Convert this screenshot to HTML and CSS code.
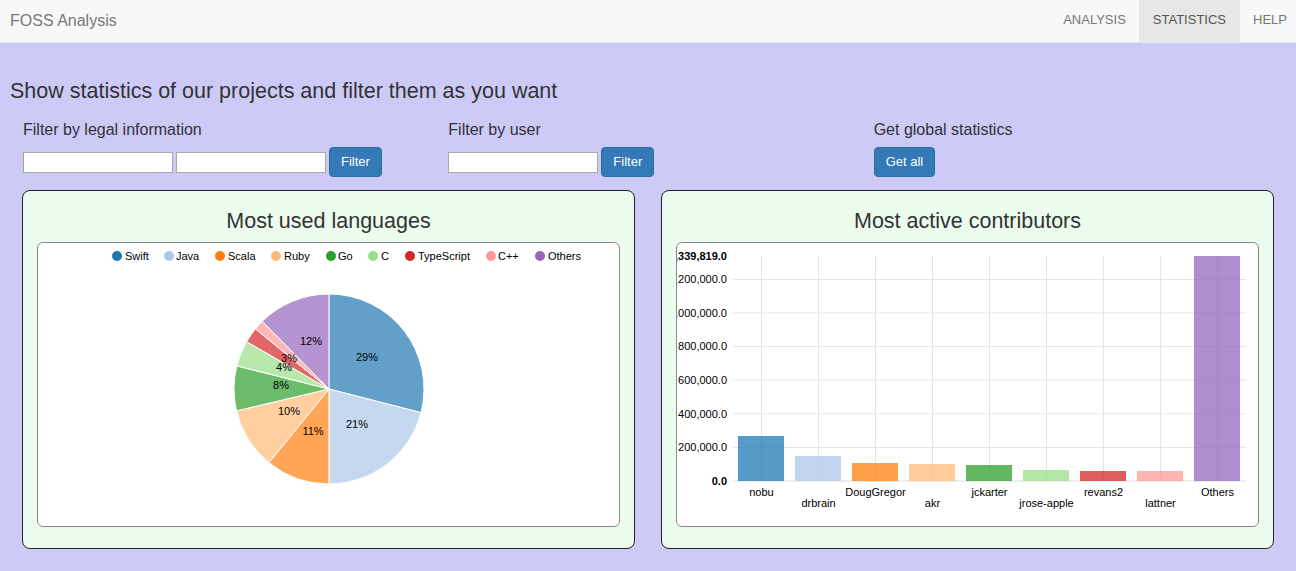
FILE: index.html
```html
<!DOCTYPE html>
<html lang="en">
<head>
<meta charset="utf-8">
<title>FOSS Analysis</title>
<link rel="stylesheet" href="styles.css">
</head>
<body>
<nav class="navbar">
  <div class="brand">FOSS Analysis</div>
  <ul class="nav">
    <li class="nav-item">ANALYSIS</li>
    <li class="nav-item active">STATISTICS</li>
    <li class="nav-item last">HELP</li>
  </ul>
</nav>
<main class="page">
  <h1 class="page-title">Show statistics of our projects and filter them as you want</h1>
  <div class="filters">
    <div class="filter">
      <label class="filter-label">Filter by legal information</label>
      <div class="controls">
        <input class="text-input" type="text">
        <input class="text-input" type="text">
        <button class="btn">Filter</button>
      </div>
    </div>
    <div class="filter">
      <label class="filter-label">Filter by user</label>
      <div class="controls">
        <input class="text-input" type="text">
        <button class="btn">Filter</button>
      </div>
    </div>
    <div class="filter">
      <label class="filter-label">Get global statistics</label>
      <div class="controls">
        <button class="btn">Get all</button>
      </div>
    </div>
  </div>
  <div class="cards">
    <section class="card">
      <h2 class="card-title">Most used languages</h2>
      <div class="chart-box">
        <svg class="chart" width="582" height="283" viewBox="0 0 582 283">
          <g class="legend">
            <circle cx="79" cy="13" r="5" fill="#1f77b4"/><text x="87" y="13" dy="0.35em">Swift</text>
            <circle cx="131" cy="13" r="5" fill="#aec7e8"/><text x="138" y="13" dy="0.35em">Java</text>
            <circle cx="182" cy="13" r="5" fill="#ff7f0e"/><text x="190" y="13" dy="0.35em">Scala</text>
            <circle cx="238" cy="13" r="5" fill="#ffbb78"/><text x="246" y="13" dy="0.35em">Ruby</text>
            <circle cx="293" cy="13" r="5" fill="#2ca02c"/><text x="300" y="13" dy="0.35em">Go</text>
            <circle cx="335" cy="13" r="5" fill="#98df8a"/><text x="343" y="13" dy="0.35em">C</text>
            <circle cx="372" cy="13" r="5" fill="#d62728"/><text x="380" y="13" dy="0.35em">TypeScript</text>
            <circle cx="453" cy="13" r="5" fill="#ff9896"/><text x="460" y="13" dy="0.35em">C++</text>
            <circle cx="502" cy="13" r="5" fill="#9467bd"/><text x="510" y="13" dy="0.35em">Others</text>
          </g>
          <g class="pie">
            <path fill="#1f77b4" d="M291,146 L291,51 A95,95 0 0,1 383.02,169.63 Z"/>
            <path fill="#aec7e8" d="M291,146 L383.02,169.63 A95,95 0 0,1 291,241 Z"/>
            <path fill="#ff7f0e" d="M291,146 L291,241 A95,95 0 0,1 230.89,219.57 Z"/>
            <path fill="#ffbb78" d="M291,146 L230.89,219.57 A95,95 0 0,1 198.55,167.89 Z"/>
            <path fill="#2ca02c" d="M291,146 L198.55,167.89 A95,95 0 0,1 198.84,122.95 Z"/>
            <path fill="#98df8a" d="M291,146 L198.84,122.95 A95,95 0 0,1 208.63,98.67 Z"/>
            <path fill="#d62728" d="M291,146 L208.63,98.67 A95,95 0 0,1 217.44,85.88 Z"/>
            <path fill="#ff9896" d="M291,146 L217.44,85.88 A95,95 0 0,1 224.24,78.41 Z"/>
            <path fill="#9467bd" d="M291,146 L224.24,78.41 A95,95 0 0,1 291,51 Z"/>
          </g>
          <g class="pie-labels">
            <text x="329" y="114" dy="0.35em">29%</text>
            <text x="319" y="181" dy="0.35em">21%</text>
            <text x="275" y="188" dy="0.35em">11%</text>
            <text x="251" y="168" dy="0.35em">10%</text>
            <text x="243" y="142" dy="0.35em">8%</text>
            <text x="246" y="124" dy="0.35em">4%</text>
            <text x="251" y="115" dy="0.35em">3%</text>
            <text x="273" y="98" dy="0.35em">12%</text>
          </g>
        </svg>
      </div>
    </section>
    <section class="card">
      <h2 class="card-title">Most active contributors</h2>
      <div class="chart-box">
        <svg class="chart" width="582" height="283" viewBox="0 0 582 283">
          <g class="grid">
            <line x1="56" x2="569" y1="204.4" y2="204.4"/>
            <line x1="56" x2="569" y1="170.8" y2="170.8"/>
            <line x1="56" x2="569" y1="137.2" y2="137.2"/>
            <line x1="56" x2="569" y1="103.6" y2="103.6"/>
            <line x1="56" x2="569" y1="70" y2="70"/>
            <line x1="56" x2="569" y1="36.5" y2="36.5"/>
            <line x1="84.5" x2="84.5" y1="13" y2="238"/>
            <line x1="141.5" x2="141.5" y1="13" y2="238"/>
            <line x1="198.5" x2="198.5" y1="13" y2="238"/>
            <line x1="255.5" x2="255.5" y1="13" y2="238"/>
            <line x1="312.5" x2="312.5" y1="13" y2="238"/>
            <line x1="369.5" x2="369.5" y1="13" y2="238"/>
            <line x1="426.5" x2="426.5" y1="13" y2="238"/>
            <line x1="483.5" x2="483.5" y1="13" y2="238"/>
            <line x1="540.5" x2="540.5" y1="13" y2="238"/>
          </g>
          <line class="zero-line" x1="56" x2="569" y1="238" y2="238"/>
          <g class="y-labels">
            <text class="bold" x="50" y="13" dy="0.35em">1,339,819.0</text>
            <text x="50" y="36.5" dy="0.35em">1,200,000.0</text>
            <text x="50" y="70" dy="0.35em">1,000,000.0</text>
            <text x="50" y="103.6" dy="0.35em">800,000.0</text>
            <text x="50" y="137.2" dy="0.35em">600,000.0</text>
            <text x="50" y="170.8" dy="0.35em">400,000.0</text>
            <text x="50" y="204.4" dy="0.35em">200,000.0</text>
            <text class="bold" x="50" y="238" dy="0.35em">0.0</text>
          </g>
          <g class="bars">
            <rect x="61" y="193" width="46" height="45" fill="#1f77b4"/>
            <rect x="118" y="213" width="46" height="25" fill="#aec7e8"/>
            <rect x="175" y="220" width="46" height="18" fill="#ff7f0e"/>
            <rect x="232" y="221" width="46" height="17" fill="#ffbb78"/>
            <rect x="289" y="222" width="46" height="16" fill="#2ca02c"/>
            <rect x="346" y="227" width="46" height="11" fill="#98df8a"/>
            <rect x="403" y="228" width="46" height="10" fill="#d62728"/>
            <rect x="460" y="228" width="46" height="10" fill="#ff9896"/>
            <rect x="517" y="13" width="46" height="225" fill="#9467bd"/>
          </g>
          <g class="x-labels">
            <text x="84.5" y="249" dy="0.35em">nobu</text>
            <text x="141.5" y="260" dy="0.35em">drbrain</text>
            <text x="198.5" y="249" dy="0.35em">DougGregor</text>
            <text x="255.5" y="260" dy="0.35em">akr</text>
            <text x="312.5" y="249" dy="0.35em">jckarter</text>
            <text x="369.5" y="260" dy="0.35em">jrose-apple</text>
            <text x="426.5" y="249" dy="0.35em">revans2</text>
            <text x="483.5" y="260" dy="0.35em">lattner</text>
            <text x="540.5" y="249" dy="0.35em">Others</text>
          </g>
        </svg>
      </div>
    </section>
  </div>
</main>
</body>
</html>
```

FILE: styles.css
```css
html, body {
  margin: 0;
  padding: 0;
  background: #cdcaf8;
  font-family: "Liberation Sans", Arial, sans-serif;
  color: #333;
}

.navbar {
  display: flex;
  justify-content: space-between;
  align-items: stretch;
  height: 42px;
  background: #f8f8f8;
  border-bottom: 1px solid #e7e7ee;
}

.brand {
  padding-left: 10px;
  font-size: 16px;
  line-height: 42px;
  color: #777;
}

.nav {
  display: flex;
  margin: 0;
  padding: 0;
  list-style: none;
}

.nav-item {
  height: 42px;
  padding: 0 13px;
  font-size: 13px;
  line-height: 39px;
  color: #777;
}

.nav-item.active {
  background: #e7e7e7;
  color: #555;
  padding: 0 14px;
}

.nav-item.last {
  padding: 0 9px 0 13px;
}

.page {
  padding: 0 10px;
}

.page-title {
  margin: 36px 0 17px;
  font-size: 21.5px;
  line-height: 24px;
  font-weight: 400;
  color: #333;
}

.filters {
  display: grid;
  grid-template-columns: repeat(3, 1fr);
}

.filter {
  padding-left: 13px;
}

.filter-label {
  display: block;
  margin-bottom: 7px;
  font-size: 16px;
  line-height: 20px;
  color: #333;
}

.controls {
  display: flex;
  align-items: center;
  height: 30px;
}

.text-input {
  box-sizing: border-box;
  width: 150px;
  height: 21px;
  margin: 0 3px 0 0;
  padding: 0 2px;
  border: 1px solid #a9a9a9;
  background: #fff;
  font-family: inherit;
  font-size: 13px;
}

.btn {
  box-sizing: border-box;
  height: 30px;
  margin: 0;
  padding: 0 11px;
  border: 1px solid #2e6da4;
  border-radius: 4px;
  background: #337ab7;
  color: #fff;
  font-family: inherit;
  font-size: 13px;
  line-height: 28px;
}

.cards {
  display: grid;
  grid-template-columns: 613px 613px;
  gap: 26px;
  margin: 13px 12px 0;
}

.card {
  border: 1px solid #222;
  border-radius: 8px;
  background: #ebfcee;
  padding: 0 14px 21px;
}

.card-title {
  margin: 0 0 9px;
  padding-top: 18px;
  font-size: 21.5px;
  line-height: 24px;
  font-weight: 400;
  text-align: center;
  color: #333;
}

.chart-box {
  box-sizing: border-box;
  height: 285px;
  border: 1px solid #888;
  border-radius: 6px;
  background: #fff;
  overflow: hidden;
}

.chart {
  display: block;
  font-family: "Liberation Sans", Arial, sans-serif;
  font-size: 11px;
}

.legend text {
  fill: #000;
}

.pie path {
  fill-opacity: 0.7;
  stroke: #fff;
  stroke-width: 1;
}

.pie-labels text {
  fill: #000;
  text-anchor: middle;
}

.grid line {
  stroke: #e5e5e5;
  stroke-width: 1;
}

.zero-line {
  stroke: #ddd;
  stroke-width: 1;
}

.y-labels text {
  fill: #000;
  text-anchor: end;
}

.y-labels text.bold {
  font-weight: 700;
}

.bars rect {
  fill-opacity: 0.75;
}

.x-labels text {
  fill: #000;
  text-anchor: middle;
}
```
